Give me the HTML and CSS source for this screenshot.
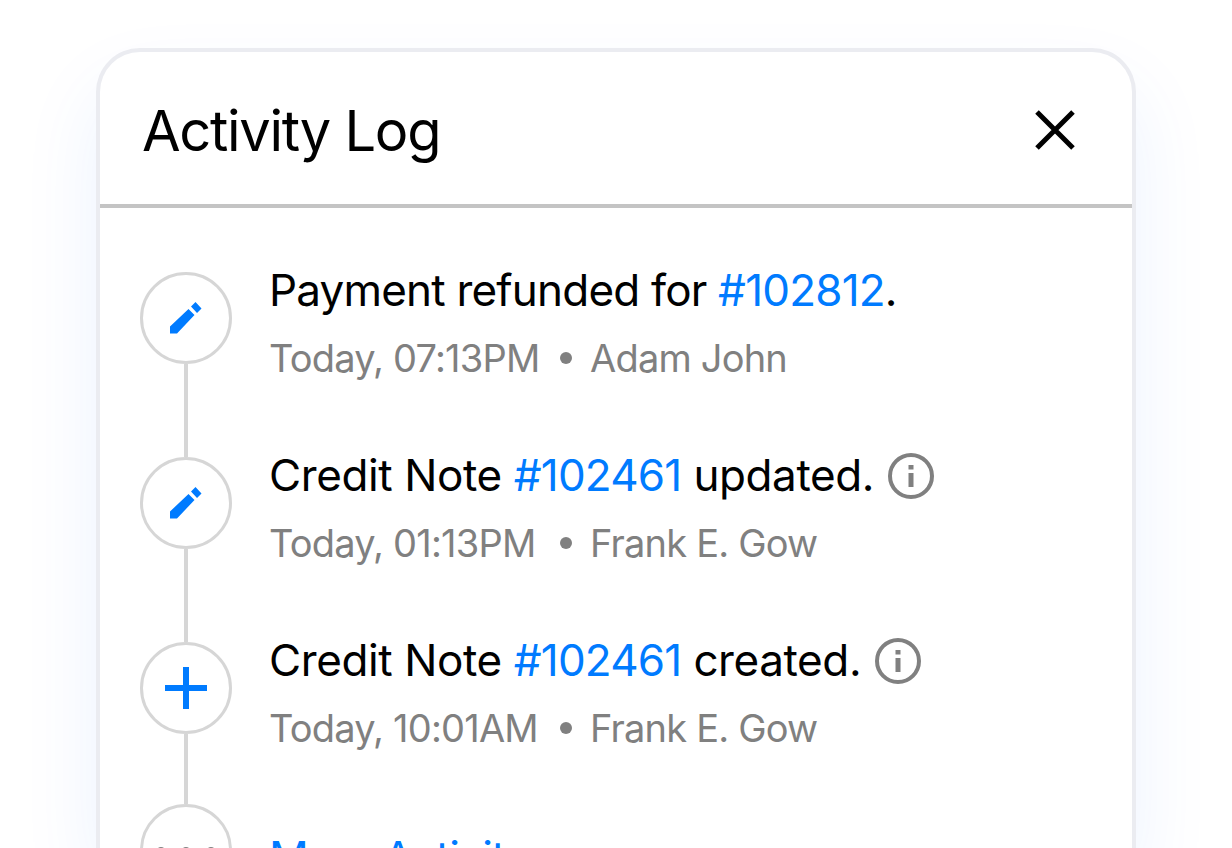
FILE: index.html
```html
<!DOCTYPE html>
<html lang="en">

<head>
    <meta charset="UTF-8">
    <meta name="viewport" content="width=device-width, initial-scale=1.0">
    <title>Activity Log</title>
    <link rel="stylesheet" href="styles.css">
</head>

<body>
    <div class="card">
        <div class="card-header">
            <h1 class="card-title">Activity Log</h1>
            <svg class="close-icon" viewBox="0 0 40 40"><path d="M2 2L38 38M38 2L2 38" /></svg>
        </div>

        <div class="log-list">
            <div class="log-row">
                <div class="log-marker">
                    <div class="log-circle">
                        <svg class="edit-icon" viewBox="0 0 32 32"><path d="M21 4.500L25.500 0L31.500 6.500L27 11zM18.500 7L24.500 13L7 31.500H0V24.500z" /></svg>
                    </div>
                    <div class="log-line"></div>
                </div>
                <div class="log-text">
                    <p class="log-title">Payment refunded for <a class="log-link">#102812</a>.</p>
                    <p class="log-meta"><span class="log-time">Today, 07:13PM</span><span class="log-dot"></span><span>Adam John</span></p>
                </div>
            </div>

            <div class="log-row">
                <div class="log-marker">
                    <div class="log-circle">
                        <svg class="edit-icon" viewBox="0 0 32 32"><path d="M21 4.500L25.500 0L31.500 6.500L27 11zM18.500 7L24.500 13L7 31.500H0V24.500z" /></svg>
                    </div>
                    <div class="log-line"></div>
                </div>
                <div class="log-text">
                    <p class="log-title log-title-note">Credit Note <a class="log-link">#102461</a> updated.<svg class="info-icon" viewBox="0 0 46 46"><circle cx="23" cy="23" r="21" /><path d="M20.500 12h5v4.500h-5zM20.500 20h5v14h-5z" /></svg></p>
                    <p class="log-meta"><span class="log-time">Today, 01:13PM</span><span class="log-dot"></span><span>Frank E. Gow</span></p>
                </div>
            </div>

            <div class="log-row log-row-short">
                <div class="log-marker">
                    <div class="log-circle">
                        <svg class="plus-icon" viewBox="0 0 42 42"><path d="M18 0h6v18h18v6H24v18h-6V24H0v-6h18z" /></svg>
                    </div>
                    <div class="log-line"></div>
                </div>
                <div class="log-text">
                    <p class="log-title log-title-note">Credit Note <a class="log-link">#102461</a> created.<svg class="info-icon" viewBox="0 0 46 46"><circle cx="23" cy="23" r="21" /><path d="M20.500 12h5v4.500h-5zM20.500 20h5v14h-5z" /></svg></p>
                    <p class="log-meta"><span class="log-time">Today, 10:01AM</span><span class="log-dot"></span><span>Frank E. Gow</span></p>
                </div>
            </div>

            <div class="log-row">
                <div class="log-marker">
                    <div class="log-circle">
                        <div class="more-dots"><span></span><span></span><span></span></div>
                    </div>
                </div>
                <div class="log-text log-text-more">
                    <p class="log-title"><a class="log-link log-link-more">More Activity</a></p>
                </div>
            </div>
        </div>
    </div>
</body>

</html>
```

FILE: styles.css
```css
html,
body {
    height: 100%;
}

body {
    margin: 0;
    overflow: hidden;
    background-color: #ffffff;
    font-family: "Inter", "Liberation Sans", sans-serif;
    color: #000000;
}

.card {
    box-sizing: border-box;
    width: 1040px;
    height: 800px;
    margin: 48px 0 0 96px;
    border: 4px solid #ebecf1;
    border-bottom: 0;
    border-radius: 44px 44px 0 0;
    background-color: #ffffff;
    box-shadow: 0 40px 80px rgba(0, 100, 255, 0.08);
    overflow: hidden;
}

.card-header {
    box-sizing: border-box;
    display: flex;
    align-items: center;
    justify-content: space-between;
    height: 156px;
    padding: 6px 57px 0 42px;
    border-bottom: 4px solid #c4c4c4;
}

.card-title {
    margin: 0;
    font-size: 56px;
    font-weight: 400;
    letter-spacing: -1.3px;
}

.close-icon {
    width: 40px;
    height: 40px;
    margin-top: -2px;
    fill: none;
    stroke: #000000;
    stroke-width: 5;
}

.log-list {
    padding: 64px 0 0 40px;
}

.log-row {
    display: flex;
    gap: 37px;
    height: 185px;
}

.log-row-short {
    height: 162px;
}

.log-marker {
    display: flex;
    flex-direction: column;
    align-items: center;
    width: 92px;
}

.log-circle {
    box-sizing: border-box;
    display: flex;
    align-items: center;
    justify-content: center;
    flex: none;
    width: 92px;
    height: 92px;
    border: 3px solid #d6d6d6;
    border-radius: 50%;
}

.log-line {
    flex: 1;
    width: 4px;
    background-color: #d6d6d6;
}

.edit-icon {
    width: 32px;
    height: 32px;
    fill: #007bff;
}

.plus-icon {
    width: 42px;
    height: 42px;
    fill: #007bff;
}

.more-dots {
    display: flex;
    gap: 15px;
    margin-top: 3px;
}

.more-dots span {
    width: 10px;
    height: 10px;
    border-radius: 50%;
    background-color: #808080;
}

.log-text {
    margin-top: -9px;
}

.log-text-more {
    margin-top: 26px;
}

.log-title {
    margin: 0;
    height: 54px;
    line-height: 54px;
    font-size: 44px;
    letter-spacing: -0.8px;
    white-space: nowrap;
}

.log-title-note {
    letter-spacing: -0.4px;
}

.log-link {
    color: #007bff;
    letter-spacing: -0.8px;
}

.log-link-more {
    letter-spacing: -1.2px;
}

.log-meta {
    display: flex;
    align-items: center;
    margin: 18px 0 0;
    height: 46px;
    font-size: 38px;
    letter-spacing: -0.8px;
    color: #808080;
}

.log-time {
    width: 291px;
}

.log-dot {
    flex: none;
    width: 12px;
    height: 12px;
    margin-right: 18px;
    border-radius: 50%;
    background-color: #808080;
}

.info-icon {
    width: 46px;
    height: 46px;
    margin-left: 14px;
    vertical-align: -8px;
    fill: #808080;
}

.info-icon circle {
    fill: none;
    stroke: #808080;
    stroke-width: 4;
}
```
